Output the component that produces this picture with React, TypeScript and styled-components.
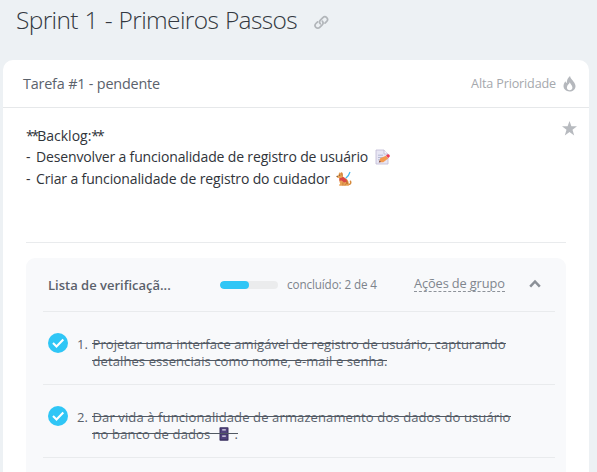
import React from "react";
import styled, { createGlobalStyle } from "styled-components";

const GlobalStyle = createGlobalStyle`
  * { box-sizing: border-box; }
  body {
    margin: 0;
    background: #edf1f4;
    font-family: "Open Sans", "Noto Sans", sans-serif;
    overflow: hidden;
  }
  svg { display: block; flex: none; }
`;

const Page = styled.main`
  height: 472px;
  padding: 0 8px 0 3px;
  overflow: hidden;
  background: #edf1f4;
`;

const TitleBar = styled.header`
  display: flex;
  height: 60px;
  padding: 0 0 0 13px;
`;

const Title = styled.h1`
  width: 298px;
  margin: 2px 0 0;
  font-size: 24.5px;
  font-weight: 300;
  line-height: 36px;
  letter-spacing: -0.64px;
  word-spacing: 1px;
  white-space: nowrap;
  color: #333840;
`;

const LinkIcon = styled.svg`
  margin-top: 15px;
`;

const Card = styled.section`
  height: 440px;
  border-radius: 10px 10px 0 0;
  background: #fff;
`;

const CardHeader = styled.div`
  display: flex;
  justify-content: space-between;
  height: 48px;
  padding: 0 13px 0 20px;
  border-bottom: 1px solid #e6e8ea;
`;

const TaskState = styled.div`
  font-size: 14.4px;
  line-height: 47px;
  letter-spacing: -0.19px;
  color: #5b626c;
`;

const Priority = styled.div`
  display: flex;
  gap: 7px;
  font-size: 12.6px;
  line-height: 47px;
  letter-spacing: -0.15px;
  color: #a5a8ad;
`;

const FlameIcon = styled.svg`
  margin-top: 16px;
`;

const CardBody = styled.div`
  padding: 0 23px;
`;

const Description = styled.div`
  display: flex;
  justify-content: space-between;
  height: 134px;
  margin-right: -11px;
  padding-top: 17px;
  font-size: 14px;
  color: #30343a;
`;

const StarIcon = styled.svg`
  margin-top: -4px;
`;

const TextLine = styled.p<{ $spacing?: number; $height?: number }>`
  display: flex;
  margin: 0;
  line-height: ${(p) => p.$height ?? 22}px;
  letter-spacing: ${(p) => p.$spacing ?? 0}px;
  white-space: nowrap;
`;

const Stars = styled.span`
  letter-spacing: -2.1px;
`;

const Dash = styled.span`
  width: 10px;
`;

const EmojiSlot = styled.span<{ $left?: number; $top?: number }>`
  display: inline-flex;
  margin: ${(p) => p.$top ?? 0}px 0 0 ${(p) => p.$left ?? 0}px;
`;

const Checklist = styled.section`
  height: 230px;
  margin-top: 15px;
  padding: 0 11px 0 17px;
  border-radius: 9px;
  background: #f8f9fb;
`;

const Rule = styled.hr`
  height: 1px;
  margin: 0;
  border: 0;
  background: #e9ebed;
`;

const ChecklistHeader = styled.div`
  display: flex;
  height: 54px;
  border-bottom: 1px solid #e9ebed;
  padding-left: 5px;
  white-space: nowrap;
`;

const ChecklistName = styled.h2`
  width: 172px;
  margin: 0;
  font-size: 13px;
  font-weight: 600;
  line-height: 54px;
  color: #5b616b;
`;

const Progress = styled.div`
  width: 58px;
  height: 8px;
  margin: 23px 9px 0 0;
  border-radius: 4px;
  background: #ebeced;
  overflow: hidden;
`;

const ProgressFill = styled.div`
  width: 50%;
  height: 100%;
  border-radius: 4px;
  background: #2fc6f6;
`;

const Completed = styled.div`
  width: 127px;
  font-size: 11.7px;
  line-height: 53px;
  letter-spacing: -0.12px;
  color: #7d838b;
`;

const GroupActions = styled.a`
  width: 91px;
  height: 17px;
  margin: 17px 24px 0 0;
  border-bottom: 1px dashed #8e939a;
  font-size: 12.8px;
  line-height: 17px;
  letter-spacing: -0.12px;
  color: #80868e;
`;

const ChevronIcon = styled.svg`
  margin-top: 21px;
`;

const Item = styled.div`
  display: flex;
  height: 73px;
  padding: 24px 0 0 5px;
  border-bottom: 1px solid #e9ebed;
  font-size: 13px;
  line-height: 17px;
  color: #59616b;
`;

const CheckIcon = styled.svg`
  margin-top: -3px;
`;

const ItemNumber = styled.span`
  width: 15px;
  margin-left: 9px;
`;

const ItemText = styled.div`
  display: flex;
  flex-direction: column;
  align-items: flex-start;
`;

const StruckLine = styled.span<{ $spacing: number }>`
  position: relative;
  display: flex;
  height: 17px;
  padding-left: 0.5px;
  letter-spacing: ${(p) => p.$spacing}px;
  white-space: nowrap;

  &::after {
    content: "";
    position: absolute;
    left: 0;
    right: 0;
    top: 7px;
    height: 1px;
    background: #515963;
  }
`;

const Check = () => (
  <CheckIcon width="20" height="20" viewBox="0 0 20 20">
    <circle cx="10" cy="10" r="10" fill="#2fc6f6" />
    <path d="M5 10.1l3.5 3.5 6.8-7" fill="none" stroke="#fff" strokeWidth="2.1" />
  </CheckIcon>
);

const MemoEmoji = () => (
  <svg width="16" height="16" viewBox="0 0 16 16">
    <path d="M1 1h8l4 4v10H1z" fill="#e8e6f4" stroke="#c5bfd8" strokeWidth=".9" />
    <path d="M9 1v4h4" fill="#f7f5fc" stroke="#bdb7d2" strokeWidth=".8" />
    <path d="M3 6.2h5M3 8.5h5M3 10.8h2" stroke="#aeb3cf" strokeWidth=".9" />
    <path d="M4 13.2l1.2-4L11 6.8l2.2 2.8-5 3.7z" fill="#f39a4f" />
    <path d="M11 6.5l1.8-1.2c1.2-.4 2.6 1.3 1.8 2.4L13.2 9z" fill="#ec3b59" />
    <path d="M3.7 13.4l1-2 1.2 1.5z" fill="#6b4a57" />
  </svg>
);

const DogEmoji = () => (
  <svg width="16" height="16" viewBox="0 0 16 16">
    <path d="M14 1c-.7 2.600-2 4.700-4.300 6.300" fill="none" stroke="#45b8ee" strokeWidth="1.2" />
    <path d="M12 13.500c2.600 0 3.200-1.300 2.500-3.200" fill="none" stroke="#d58a3c" strokeWidth="1.500" strokeLinecap="round" />
    <path d="M2.900 2.200l.9-1 .8.900 1.300-1.100.9 1.500.2 3.200 2.600 1.600c2.100 1.200 3.200 3 3.200 5.200v2.300H3.200v-1.200l1-.6-.9-3 .1-2.900-2.300-.3-.5-1.500 2-1.400z" fill="#e9a255" />
    <path d="M5.500 1.300l.9 1.400.2 2.500-1.200-1.100zM9.700 8l2 2.500.5 2.500-2 .2z" fill="#c87935" />
    <path d="M3.400 6.900c1.500.1 2.700-.3 3.500-1.200l3.600 2.800.2 2.200-2.600.8-2.500-2-2.200.2z" fill="#d94747" />
    <path d="M6.900 11.300v3.300M9.600 12.700l-.7 1.900" stroke="#bd7638" strokeWidth=".7" />
    <circle cx="3.700" cy="4.100" r=".55" fill="#50352c" />
    <circle cx="1.100" cy="5.300" r=".6" fill="#50352c" />
  </svg>
);

const CabinetEmoji = () => (
  <svg width="10" height="14" viewBox="0 0 10 14">
    <rect x=".5" y=".2" width="9" height="13.6" rx=".8" fill="#362d5d" />
    <rect x="1.5" y="1.2" width="7" height="5" fill="#51437d" />
    <rect x="1.5" y="7.4" width="7" height="5" fill="#51437d" />
    <path d="M3.2 2.8h3.6M3.2 9.2h3.6" stroke="#e4dfef" strokeWidth="1.3" />
  </svg>
);

export default function App() {
  return (
    <>
      <GlobalStyle />
      <Page>
        <TitleBar>
          <Title>Sprint 1 - Primeiros Passos</Title>
          <LinkIcon width="15" height="15" viewBox="0 0 15 15" fill="none" stroke="#b2b6ba" strokeWidth="1.7" strokeLinecap="round">
            <path d="M6.3 8.8a2.7 2.7 0 0 1 .1-3.7l2.5-2.5a2.65 2.65 0 0 1 3.8 3.8L11 8.1" />
            <path d="M8.3 6.1a2.7 2.7 0 0 1-.1 3.7l-2.5 2.5a2.65 2.65 0 0 1-3.8-3.8l1.7-1.7" />
          </LinkIcon>
        </TitleBar>
        <Card>
          <CardHeader>
            <TaskState>Tarefa #1 - pendente</TaskState>
            <Priority>
              Alta Prioridade
              <FlameIcon width="13" height="16" viewBox="0 0 13 16">
                <path
                  fillRule="evenodd"
                  fill="#b5b8bd"
                  d="M7 0c.5 2.6 2.2 3.8 3.6 5.7C11.700 7.200 12.500 8.600 12.500 10.200c0 3-2.600 5.300-6 5.300S.5 13.200.5 10.100c0-2 .9-3.500 2-4.900.3 1 .7 1.500 1.300 1.700C3.700 4.100 4.900 1.700 7 0zM6.800 6.300C6.500 8 3.900 9 3.900 11.500c0 1.700 1.100 2.700 2.700 2.700s2.800-1.100 2.800-2.800c0-2.200-2.200-3-2.600-5.100z"
                />
              </FlameIcon>
            </Priority>
          </CardHeader>
          <CardBody>
            <Description>
              <div>
                <TextLine $height={21}>
                  <Stars>**</Stars>Backlog:<Stars>**</Stars>
                </TextLine>
                <TextLine $spacing={-0.15}>
                  <Dash>- </Dash>Desenvolver a funcionalidade de registro de usuário
                  <EmojiSlot $left={7} $top={3}><MemoEmoji /></EmojiSlot>
                </TextLine>
                <TextLine $spacing={-0.13}>
                  <Dash>- </Dash>Criar a funcionalidade de registro do cuidador
                  <EmojiSlot $left={6} $top={3}><DogEmoji /></EmojiSlot>
                </TextLine>
              </div>
              <StarIcon width="15" height="15" viewBox="0 0 15 15">
                <path d="M7.500 0l1.900 5.300H15l-4.500 3.500 1.700 5.600-4.700-3.300-4.700 3.300 1.700-5.600L0 5.300h5.600z" fill="#b7babf" />
              </StarIcon>
            </Description>
            <Rule />
            <Checklist>
              <ChecklistHeader>
                <ChecklistName>Lista de verificaçã...</ChecklistName>
                <Progress><ProgressFill /></Progress>
                <Completed>concluído: 2 de 4</Completed>
                <GroupActions>Ações de grupo</GroupActions>
                <ChevronIcon width="12" height="9" viewBox="0 0 12 9">
                  <path d="M1.200 7.700L6 2.500l4.800 5.200" fill="none" stroke="#8b9097" strokeWidth="2.500" />
                </ChevronIcon>
              </ChecklistHeader>
              <Item>
                <Check />
                <ItemNumber>1.</ItemNumber>
                <ItemText>
                  <StruckLine $spacing={0.09}>Projetar uma interface amigável de registro de usuário, capturando</StruckLine>
                  <StruckLine $spacing={0.1}>detalhes essenciais como nome, e-mail e senha.</StruckLine>
                </ItemText>
              </Item>
              <Item>
                <Check />
                <ItemNumber>2.</ItemNumber>
                <ItemText>
                  <StruckLine $spacing={0.12}>Dar vida à funcionalidade de armazenamento dos dados do usuário</StruckLine>
                  <StruckLine $spacing={0.14}>
                    no banco de dados
                    <EmojiSlot $left={9} $top={1}><CabinetEmoji /></EmojiSlot>
                    <EmojiSlot $left={5}>.</EmojiSlot>
                  </StruckLine>
                </ItemText>
              </Item>
            </Checklist>
          </CardBody>
        </Card>
      </Page>
    </>
  );
}
